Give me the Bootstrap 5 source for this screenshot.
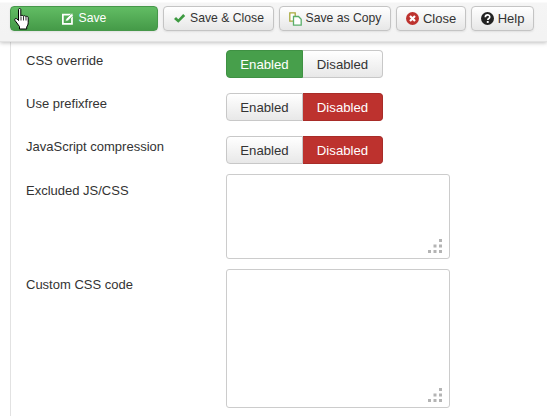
<!DOCTYPE html>
<html lang="en">
<head>
<meta charset="utf-8">
<title>Settings</title>
<link href="https://cdn.jsdelivr.net/npm/bootstrap@5.3.0/dist/css/bootstrap.min.css" rel="stylesheet">
<style>
html,body{height:416px;overflow:hidden;background:#fff}
body{font-family:"Liberation Sans",Arial,sans-serif;font-size:13px;color:#333;position:relative}
.tbar{height:42px;padding:6px 0 0 10px;gap:5px;background:linear-gradient(#fff 0,#fff 2px,#f5f5f5 3px,#f3f3f3 36px);box-shadow:0 1px 4px rgba(0,0,0,.25);border-bottom:1px solid #e2e2e2;position:relative;z-index:2}
.tb{height:25px;padding:0;font-size:13px;line-height:23px;color:#333;border:1px solid #c4c4c4;border-radius:4px;background:linear-gradient(#fff,#e7e7e7);gap:4px;box-shadow:0 1px 2px rgba(0,0,0,.08)}
.tb svg{display:block;flex:none}
.tb-save{width:148px;color:#fff;background:linear-gradient(#62bd64,#459a48);border-color:#46974a;font-size:12.200px}
.tb-sc{width:111px;font-size:12.200px}.tb-copy{width:112px;font-size:12.200px}.tb-close{width:70px}.tb-help{width:63px}
.pane{border-left:1px solid #e2e2e2;margin-left:10px;padding:8px 0 0 15px;height:374px}
.lbl{width:200px;flex:none;line-height:18px;padding-top:2px}
.frow{margin-bottom:15px}
.frow-t{margin-bottom:10px;margin-top:-5px}
.seg{height:28px;width:157px}
.sg{height:28px;padding:0;font-size:13.200px;line-height:28px;text-align:center;border:1px solid #c8c8c8;color:#333;background:linear-gradient(#fff,#e8e8e8)}
.sg-a{width:77px;border-radius:4px 0 0 4px}
.sg-b{width:80px;border-left:0;border-radius:0 4px 4px 0}
.sg-on{color:#fff;background:#479f4b;border-color:#3f9143}
.sg-off{color:#fff;background:#bd322e;border-color:#a82c28}
.ta{width:224px;border:1px solid #ccc;border-radius:3px;position:relative;margin-left:0;background:#fff}
.ta-1{height:85px}.ta-2{height:139px}
.lbl-t1{padding-top:8px}.lbl-t2{padding-top:7px}
.grip{position:absolute;right:7px;bottom:5px}
.hand{position:absolute;left:14px;top:8px;z-index:5}
</style>
</head>
<body>
<div class="tbar d-flex align-items-start">
  <button class="btn tb tb-save d-flex align-items-center justify-content-center">
    <svg width="13" height="12" viewBox="0 0 15 13"><path d="M1 1.500h10.500v10.500h-10.500z" fill="none" stroke="#fff" stroke-width="2"/><path d="M4 9l.6-2.600L10.800.4l2.200 2.200-6.200 6z" fill="#fff" stroke="#55ad58" stroke-width=".7"/></svg>
    <span>Save</span>
  </button>
  <button class="btn tb tb-sc d-flex align-items-center justify-content-center">
    <svg width="13" height="11" viewBox="0 0 14 12"><path d="M1 6.500l2.200-2.200 2.500 2.500L11 1.200l2.200 2.200L5.700 10.500z" fill="#3d9a41"/></svg>
    <span>Save &amp; Close</span>
  </button>
  <button class="btn tb tb-copy d-flex align-items-center justify-content-center">
    <svg width="13" height="14" viewBox="0 0 13 14"><path d="M.8.8h5.400v8.400h-5.400z" fill="#fff" stroke="#a9a93c" stroke-width="1.300"/><path d="M4.500 4.500h5l2.700 2.700v6h-7.700z" fill="#fff" stroke="#5bae6b" stroke-width="1.300"/></svg>
    <span>Save as Copy</span>
  </button>
  <button class="btn tb tb-close d-flex align-items-center justify-content-center">
    <svg width="13" height="13" viewBox="0 0 13 13"><circle cx="6.500" cy="6.500" r="6.500" fill="#bd322e"/><path d="M4 4l5 5M9 4l-5 5" stroke="#fff" stroke-width="2.200"/></svg>
    <span>Close</span>
  </button>
  <button class="btn tb tb-help d-flex align-items-center justify-content-center">
    <svg width="13" height="13" viewBox="0 0 13 13"><circle cx="6.500" cy="6.500" r="6.500" fill="#222"/><path d="M4.300 5.200c0-3 4.500-3 4.500-.3 0 1.600-2 1.600-2 3" fill="none" stroke="#fff" stroke-width="1.600"/><rect x="5.800" y="9" width="1.900" height="1.900" fill="#fff"/></svg>
    <span>Help</span>
  </button>
</div>
<div class="pane">
  <div class="d-flex frow">
    <div class="lbl">CSS override</div>
    <div class="d-flex seg"><div class="sg sg-a sg-on">Enabled</div><div class="sg sg-b">Disabled</div></div>
  </div>
  <div class="d-flex frow">
    <div class="lbl">Use prefixfree</div>
    <div class="d-flex seg"><div class="sg sg-a">Enabled</div><div class="sg sg-b sg-off">Disabled</div></div>
  </div>
  <div class="d-flex frow">
    <div class="lbl">JavaScript compression</div>
    <div class="d-flex seg"><div class="sg sg-a">Enabled</div><div class="sg sg-b sg-off">Disabled</div></div>
  </div>
  <div class="d-flex frow-t">
    <div class="lbl lbl-t1">Excluded JS/CSS</div>
    <div class="ta ta-1"><svg class="grip" width="14" height="14" viewBox="0 0 14 14" fill="#b4b4b4"><rect x="11" y="0" width="3" height="3"/><rect x="5.500" y="5.500" width="3" height="3"/><rect x="11" y="5.500" width="3" height="3"/><rect x="0" y="11" width="3" height="3"/><rect x="5.500" y="11" width="3" height="3"/><rect x="11" y="11" width="3" height="3"/></svg></div>
  </div>
  <div class="d-flex frow-t mt-0">
    <div class="lbl lbl-t2">Custom CSS code</div>
    <div class="ta ta-2"><svg class="grip" width="14" height="14" viewBox="0 0 14 14" fill="#b4b4b4"><rect x="11" y="0" width="3" height="3"/><rect x="5.500" y="5.500" width="3" height="3"/><rect x="11" y="5.500" width="3" height="3"/><rect x="0" y="11" width="3" height="3"/><rect x="5.500" y="11" width="3" height="3"/><rect x="11" y="11" width="3" height="3"/></svg></div>
  </div>
</div>
<svg class="hand" width="18" height="22" viewBox="0 0 18 22"><path d="M4.500 1.500c0-1.300 2.300-1.300 2.300 0V8c.5-1 2.300-.9 2.600.3.500-.9 2.200-.8 2.500.4.600-.7 2.300-.4 2.300 1v5c0 2-.8 3-1.500 4.300v2H5.500v-2.500L1 12.500c-.9-1.300.6-2.600 1.800-1.700l1.700 1.700z" fill="#fff" stroke="#000" stroke-width="1"/><path d="M7 8.500v4M9.500 8.500v4M12 9v3.500" stroke="#000" stroke-width=".8"/></svg>
</body>
</html>
